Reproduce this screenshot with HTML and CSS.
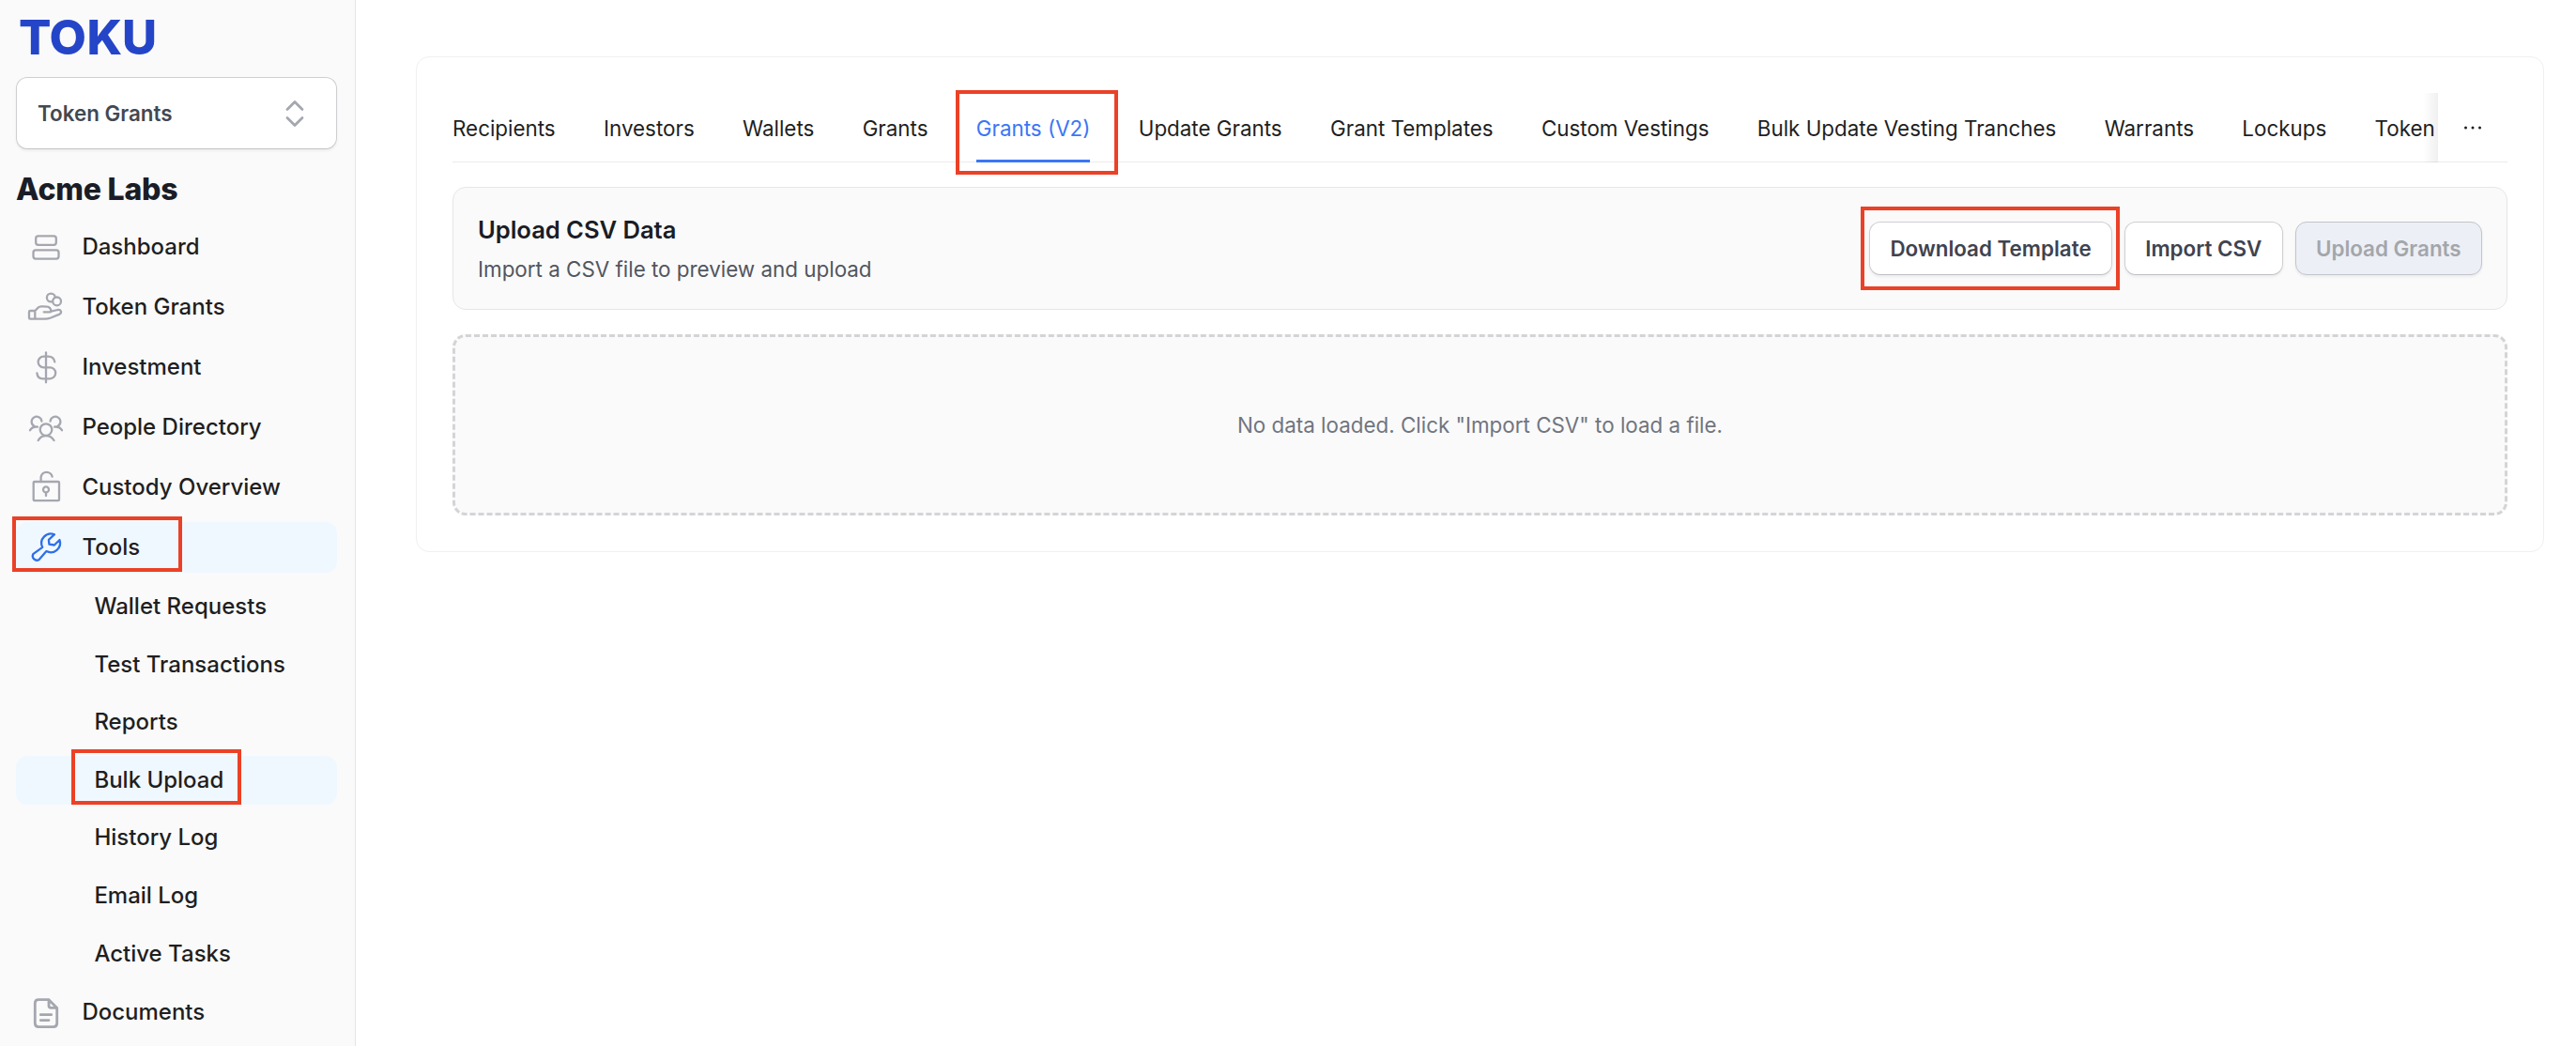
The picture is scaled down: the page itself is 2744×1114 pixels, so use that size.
FILE: index.html
```html
<!DOCTYPE html>
<html lang="en">
<head>
    <meta charset="UTF-8">
    <meta name="viewport" content="width=device-width, initial-scale=1.0">
    <title>Toku - Bulk Upload</title>
    <link rel="stylesheet" href="styles.css">
</head>
<body>
    <div class="layout">
        <aside class="sidebar">
            <svg class="logo" width="160" height="64" viewBox="0 0 160 64">
                <text x="3 35.5 75.5 113" y="52.5">TOKU</text>
            </svg>
            <button type="button" class="product-select">
                <span>Token Grants</span>
                <svg width="20" height="30" viewBox="0 0 20 30">
                    <path d="M2 10.5 L10 2.5 L18 10.5 M2 19.5 L10 27.5 L18 19.5"/>
                </svg>
            </button>
            <h1 class="company">Acme Labs</h1>
            <nav class="menu">
                <a class="menu-item">
                    <svg class="icon" viewBox="0 0 40 40">
                        <rect x="9.2" y="8.4" width="21.6" height="9.4" rx="2.5"/>
                        <rect x="6.5" y="23.4" width="27" height="9.2" rx="2.5"/>
                    </svg>
                    <span>Dashboard</span>
                </a>
                <a class="menu-item">
                    <svg class="icon" viewBox="0 0 40 40">
                        <circle cx="25.3" cy="10" r="4.4"/>
                        <circle class="cover" cx="31.6" cy="13.9" r="4.4"/>
                        <path d="M8.3 24 V32.6 M8.3 24 H3.2 Q2 24 2 25.2 V31.4 Q2 32.6 3.2 32.6 H19 Q22 32.6 25 31.5 L34.5 27.6 Q36.4 26.6 36 24.6 Q35.2 22.6 32.4 23 L25.3 24.7 Q25.6 21.2 22.2 19.8 Q20.8 19.2 15 19.3 Q13 19.3 11.5 20.7 L8.3 24 M17.7 25.3 H23.5 Q25.2 25.3 25.3 24.7"/>
                    </svg>
                    <span>Token Grants</span>
                </a>
                <a class="menu-item">
                    <svg class="icon" viewBox="0 0 40 40">
                        <path d="M20 4.3 V36.3 M29.3 14.4 Q28.3 8.6 22.5 8.6 H17.5 A5.8 5.8 0 0 0 17.5 20.3 H24.2 A6 6 0 0 1 24.2 32.3 H16.5 Q11 32.3 10.4 26.4"/>
                    </svg>
                    <span>Investment</span>
                </a>
                <a class="menu-item">
                    <svg class="icon" viewBox="0 0 40 40">
                        <circle cx="20" cy="22.6" r="6.3"/>
                        <path d="M11.7 34 Q14.5 29.2 20 29.2 Q25.5 29.2 28.5 34"/>
                        <path d="M15.4 13.6 A5.4 5.4 0 1 0 7.3 18.8 M3 23.2 Q5.6 19 11 19.6"/>
                        <path d="M24.6 13.6 A5.4 5.4 0 1 1 32.7 18.8 M37 23.2 Q34.4 19 29 19.6"/>
                    </svg>
                    <span>People Directory</span>
                </a>
                <a class="menu-item">
                    <svg class="icon" viewBox="0 0 40 40">
                        <rect x="6.7" y="14" width="27.3" height="20.2" rx="1"/>
                        <path d="M14.6 14 V9 A6.1 6.1 0 0 1 26.6 8.6 M20 25.6 V29"/>
                        <circle cx="20" cy="22.4" r="3"/>
                    </svg>
                    <span>Custody Overview</span>
                </a>
                <a class="menu-item active marked">
                    <svg class="icon" viewBox="0 0 40 40">
                        <path d="M29 6.2 L22.9 11.8 L23.4 16.7 L28.9 17.5 L34.5 12 A10 10 0 0 1 20.4 24.1 L12.4 33.2 A4.6 4.6 0 0 1 6.2 27.2 L16.2 19.8 A10 10 0 0 1 29 6.2 Z"/>
                    </svg>
                    <span>Tools</span>
                </a>
                <div class="submenu">
                    <a class="sub-item"><span>Wallet Requests</span></a>
                    <a class="sub-item"><span>Test Transactions</span></a>
                    <a class="sub-item"><span>Reports</span></a>
                    <a class="sub-item active marked"><span>Bulk Upload</span></a>
                    <a class="sub-item"><span>History Log</span></a>
                    <a class="sub-item"><span>Email Log</span></a>
                    <a class="sub-item"><span>Active Tasks</span></a>
                </div>
                <a class="menu-item">
                    <svg class="icon bold" viewBox="0 0 40 40">
                        <path d="M23 5.7 H12.2 Q8.3 5.7 8.3 9.6 V30.8 Q8.3 34.6 12.2 34.6 H27.8 Q31.7 34.6 31.7 30.8 V14.4 L23 5.7 V12 Q23 14.4 25.4 14.4 H31.7 M14.3 21.7 H25.7 M14.3 27.6 H23"/>
                    </svg>
                    <span>Documents</span>
                </a>
            </nav>
        </aside>
        <main class="content">
            <section class="card">
                <div class="tabs">
                    <div class="tab-list">
                        <a class="tab">Recipients</a>
                        <a class="tab">Investors</a>
                        <a class="tab">Wallets</a>
                        <a class="tab">Grants</a>
                        <a class="tab active marked">Grants (V2)</a>
                        <a class="tab">Update Grants</a>
                        <a class="tab">Grant Templates</a>
                        <a class="tab">Custom Vestings</a>
                        <a class="tab">Bulk Update Vesting Tranches</a>
                        <a class="tab">Warrants</a>
                        <a class="tab">Lockups</a>
                        <a class="tab">Token</a>
                    </div>
                    <button type="button" class="tabs-more">
                        <svg width="20" height="4" viewBox="0 0 20 4">
                            <circle cx="2.5" cy="2" r="1.5"/>
                            <circle cx="10" cy="2" r="1.5"/>
                            <circle cx="17.5" cy="2" r="1.5"/>
                        </svg>
                    </button>
                </div>
                <div class="upload-bar">
                    <div class="upload-text">
                        <h2>Upload CSV Data</h2>
                        <p>Import a CSV file to preview and upload</p>
                    </div>
                    <div class="actions">
                        <button type="button" class="btn marked">Download Template</button>
                        <button type="button" class="btn">Import CSV</button>
                        <button type="button" class="btn" disabled>Upload Grants</button>
                    </div>
                </div>
                <div class="empty">No data loaded. Click "Import CSV" to load a file.</div>
            </section>
        </main>
    </div>
</body>
</html>
```
FILE: styles.css
```css
* {
    box-sizing: border-box;
}
body {
    margin: 0;
    font-family: Inter, "Liberation Sans", sans-serif;
    font-size: 24px;
    color: #1f1f1f;
    background-color: #fff;
}
h1, h2, p {
    margin: 0;
}
button {
    font-family: inherit;
    cursor: pointer;
}
.layout {
    display: flex;
    height: 1114px;
    overflow: hidden;
}

/* sidebar */
.sidebar {
    flex: none;
    width: 379px;
    padding: 5px 19px 0 17px;
    background-color: #fafafa;
    border-right: 1px solid #e4e4e7;
}
.logo {
    display: block;
}
.logo text {
    font-size: 51px;
    font-weight: 800;
    fill: #2545c8;
}
.product-select {
    display: flex;
    align-items: center;
    justify-content: space-between;
    width: 342px;
    height: 77px;
    margin-top: 13px;
    padding: 0 34px 0 22px;
    background-color: #fff;
    border: 1px solid #cfcfd2;
    border-bottom-color: #c4c4c7;
    border-radius: 12px;
    box-shadow: 0 2px 3px rgba(0, 0, 0, 0.05);
    color: #434852;
    font-size: 22.4px;
    font-weight: 600;
}
.product-select svg {
    fill: none;
    stroke: #a5a7b0;
    stroke-width: 2.8;
    stroke-linecap: round;
    stroke-linejoin: round;
}
.company {
    margin-top: 23px;
    color: #1a1d26;
    font-size: 32px;
    font-weight: 800;
    line-height: 40px;
    letter-spacing: -0.2px;
}
.menu {
    display: flex;
    flex-direction: column;
    gap: 10px;
    margin-top: 14px;
}
.menu-item,
.sub-item {
    position: relative;
    display: flex;
    align-items: center;
    border-radius: 12px;
    font-weight: 500;
    white-space: nowrap;
}
.menu-item {
    height: 54px;
    padding-left: 12px;
    gap: 18.4px;
}
.menu-item span {
    padding-bottom: 2px;
}
.submenu {
    display: flex;
    flex-direction: column;
    gap: 9.6px;
}
.sub-item {
    height: 52px;
    padding-left: 83.4px;
}
.sub-item span {
    padding-bottom: 1px;
}
.menu-item.active,
.sub-item.active {
    background-color: #f0f8ff;
}
.icon {
    flex: none;
    width: 40px;
    height: 40px;
    fill: none;
    stroke: #a5a7b0;
    stroke-width: 2.3;
    stroke-linecap: round;
    stroke-linejoin: round;
}
.icon.bold {
    stroke-width: 2.8;
}
.icon .cover {
    fill: #fafafa;
}
.active .icon {
    stroke: #2f6fe8;
}

/* red callout frames */
.marked {
    position: relative;
}
.marked::after {
    content: "";
    position: absolute;
    box-sizing: border-box;
    border: 4px solid #eb4127;
    pointer-events: none;
}
.menu-item.marked::after {
    left: -4px;
    top: -6px;
    width: 181px;
    height: 59px;
}
.sub-item.marked::after {
    left: 59px;
    top: -7px;
    width: 181px;
    height: 59px;
}
.tab.marked::after {
    left: -22px;
    top: -3px;
    width: 173px;
    height: 90px;
}
.btn.marked::after {
    left: -10px;
    top: -17px;
    width: 276px;
    height: 89px;
}

/* main area */
.content {
    flex: 1;
    min-width: 0;
    padding: 60px 34px 0 64px;
}
.card {
    height: 528px;
    padding: 38px 38px 0;
    border: 1px solid #f0f0f0;
    border-radius: 14px;
}
.tabs {
    display: flex;
    height: 74px;
    border-bottom: 1px solid #ebebeb;
}
.tab-list {
    position: relative;
    display: flex;
    flex: 1;
    gap: 51.3px;
    min-width: 0;
    height: 74px;
}
.tab-list::after {
    content: "";
    position: absolute;
    top: 0;
    right: 0;
    width: 16px;
    height: 74px;
    background: linear-gradient(to right, rgba(0, 0, 0, 0), rgba(0, 0, 0, 0.06));
}
.tab {
    position: relative;
    display: flex;
    align-items: center;
    padding-top: 1px;
    font-size: 22.4px;
    white-space: nowrap;
}
.tab.active {
    color: #3b76f6;
    box-shadow: inset 0 -3px #3b76f6;
}
.tabs-more {
    flex: none;
    width: 74px;
    padding: 0;
    background-color: #fff;
    border: none;
}
.tabs-more svg {
    display: block;
    margin: 0 auto;
    fill: #1f1f1f;
}
.upload-bar {
    display: flex;
    align-items: center;
    justify-content: space-between;
    height: 131px;
    margin-top: 26px;
    padding: 0 26px;
    background-color: #fafafa;
    border: 1px solid #e6e6e8;
    border-radius: 14px;
}
.upload-text {
    padding-top: 3px;
}
.upload-text h2 {
    color: #1a1d26;
    font-size: 25.6px;
    font-weight: 600;
    line-height: 42px;
    letter-spacing: -0.05px;
}
.upload-text p {
    color: #52565f;
    font-size: 22.4px;
    line-height: 42px;
}
.actions {
    display: flex;
    gap: 12.8px;
}
.btn {
    height: 57px;
    padding: 0 21.4px;
    background-color: #fff;
    border: 1px solid #cfcfd2;
    border-bottom-color: #c0c0c4;
    border-radius: 12px;
    box-shadow: 0 2px 3px rgba(0, 0, 0, 0.06);
    color: #3f4350;
    font-size: 22.4px;
    font-weight: 600;
    white-space: nowrap;
}
.btn:disabled {
    background-color: #eceff5;
    border-color: #c2c4cb;
    color: #a3a6ab;
}
.empty {
    display: flex;
    align-items: center;
    justify-content: center;
    height: 193px;
    margin-top: 26px;
    background-color: #fafafa;
    border: 3px dashed #d4d4d8;
    border-radius: 14px;
    color: #71757f;
    font-size: 22.4px;
}
```
